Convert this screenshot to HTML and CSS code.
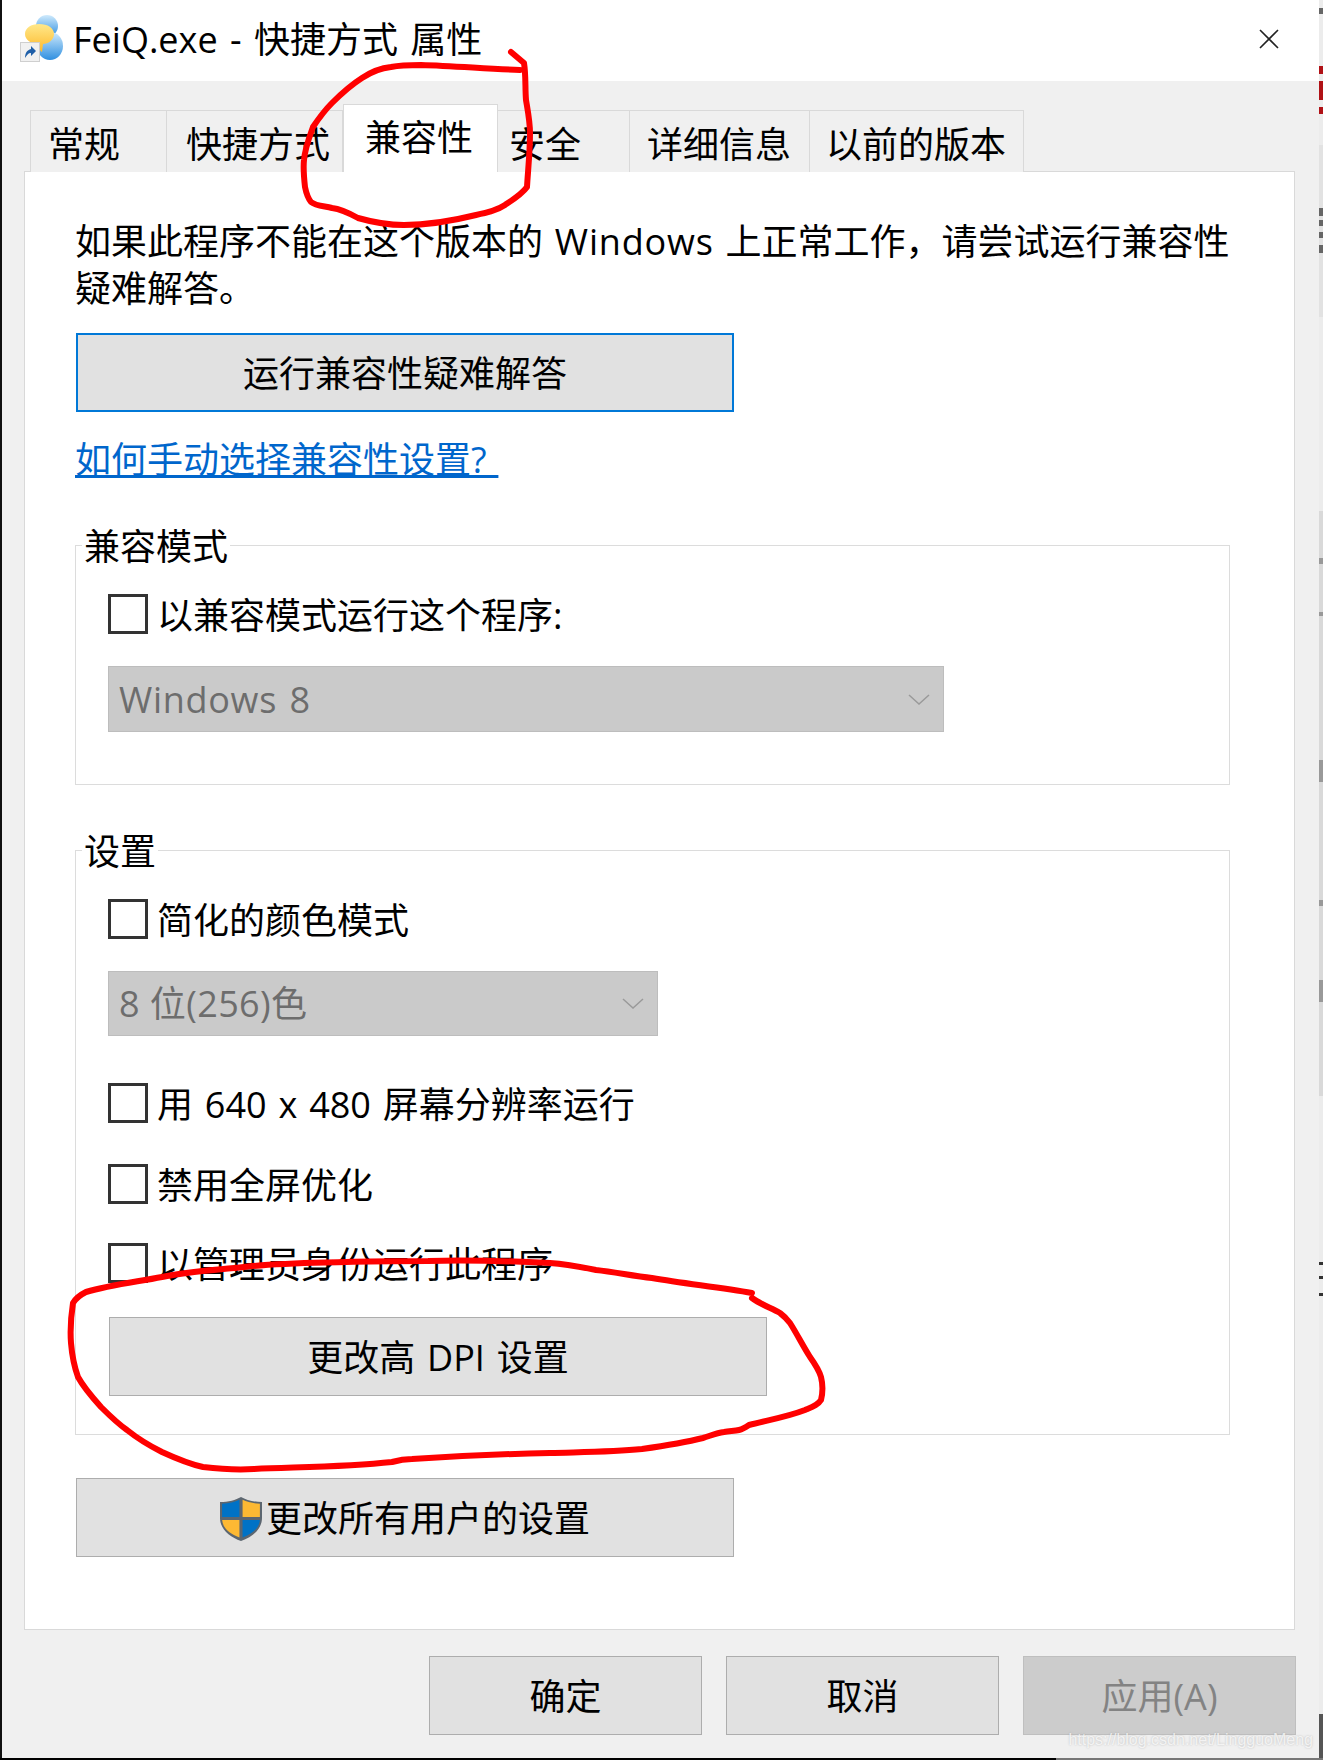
FILE: index.html

```html
<!DOCTYPE html>
<html lang="zh-CN">
<head>
    <meta charset="UTF-8">
    <title>FeiQ.exe - 快捷方式 属性</title>
    <link rel="stylesheet" href="styles.css">
</head>
<body>

<div class="screen">
    <div class="edge-left"></div>

    <div class="window">
        <div class="titlebar">
            <svg class="app-icon" width="46" height="48" viewBox="0 0 46 48">
                <defs>
                    <linearGradient id="blueFill" x1="0" y1="0" x2="0" y2="1">
                        <stop offset="0" stop-color="#cfeafc"/>
                        <stop offset="1" stop-color="#2f8fe0"/>
                    </linearGradient>
                    <linearGradient id="yellowFill" x1="0" y1="0" x2="0" y2="1">
                        <stop offset="0" stop-color="#ffe88a"/>
                        <stop offset="1" stop-color="#fdb92c"/>
                    </linearGradient>
                </defs>
                <circle cx="27" cy="11" r="11" fill="url(#blueFill)"/>
                <ellipse cx="30" cy="31" rx="13" ry="14" fill="url(#blueFill)"/>
                <path d="M19 9c9 0 15 4 15 10 0 6-6 10-11 10l-1 8c-2-1-3-4-3-8-8 0-14-4-14-10 0-6 6-10 14-10z" fill="url(#yellowFill)"/>
                <rect x="0.5" y="27.5" width="19" height="19" fill="#f1f1f1" stroke="#cfcfcf"/>
                <path d="M5 43c0-5 2-8 6-9v-3l5 5-5 5v-3c-3 0-4 2-6 5z" fill="#1f5fa8"/>
            </svg>
            <span class="title-text">FeiQ.exe - 快捷方式 属性</span>
            <svg class="close-icon" width="20" height="20" viewBox="0 0 20 20">
                <path d="M1 1l18 18M19 1L1 19" fill="none" stroke="#222" stroke-width="1.6"/>
            </svg>
        </div>

        <div class="content">
            <div class="tabs">
                <div class="tab tab-general">常规</div>
                <div class="tab tab-shortcut">快捷方式</div>
                <div class="tab tab-active">兼容性</div>
                <div class="tab tab-security">安全</div>
                <div class="tab tab-details">详细信息</div>
                <div class="tab tab-versions">以前的版本</div>
            </div>

            <div class="panel">
                <p class="intro">如果此程序不能在这个版本的 <span class="latin">Windows</span> 上正常工作，请尝试运行兼容性<br>疑难解答。</p>
                <div class="btn btn-focus">运行兼容性疑难解答</div>
                <a class="help-link" href="#">如何手动选择兼容性设置?&nbsp;</a>

                <div class="group group-mode">
                    <div class="legend">兼容模式</div>
                    <div class="check-row">
                        <span class="checkbox"></span>
                        <span class="label">以兼容模式运行这个程序:</span>
                    </div>
                    <div class="select select-wide">
                        <span>Windows 8</span>
                        <svg width="22" height="11" viewBox="0 0 22 11"><path d="M1 1l10 9 10-9" fill="none" stroke="#9a9a9a" stroke-width="1.5"/></svg>
                    </div>
                </div>

                <div class="group group-settings">
                    <div class="legend">设置</div>
                    <div class="check-row row-color">
                        <span class="checkbox"></span>
                        <span class="label">简化的颜色模式</span>
                    </div>
                    <div class="select select-narrow">
                        <span>8 位(256)色</span>
                        <svg width="22" height="11" viewBox="0 0 22 11"><path d="M1 1l10 9 10-9" fill="none" stroke="#9a9a9a" stroke-width="1.5"/></svg>
                    </div>
                    <div class="check-row row-res">
                        <span class="checkbox"></span>
                        <span class="label">用 640 x 480 屏幕分辨率运行</span>
                    </div>
                    <div class="check-row row-full">
                        <span class="checkbox"></span>
                        <span class="label">禁用全屏优化</span>
                    </div>
                    <div class="check-row row-admin">
                        <span class="checkbox"></span>
                        <span class="label">以管理员身份运行此程序</span>
                    </div>
                    <div class="btn btn-dpi">更改高 DPI 设置</div>
                </div>

                <div class="btn btn-users">
                    <svg class="shield" width="42" height="46" viewBox="1 0 40 46" preserveAspectRatio="none">
                        <path d="M21 1c5 3 12 5 20 5v16c0 11-9 19-20 23C10 41 1 33 1 22V6c8 0 15-2 20-5z" fill="#5c6670"/>
                        <path d="M19.500 3.800C15 6 9.500 7.500 3 7.800V21h16.500z" fill="#0072c6"/>
                        <path d="M22.500 3.800C27 6 32.500 7.500 39 7.800V21H22.500z" fill="#fdb933"/>
                        <path d="M3 24h16.500v17.500C10.500 38 3.500 32 3 24z" fill="#fdb933"/>
                        <path d="M39 24H22.500v17.500C31.500 38 38.500 32 39 24z" fill="#0072c6"/>
                    </svg>
                    <span>更改所有用户的设置</span>
                </div>
            </div>

            <div class="footer">
                <div class="btn btn-footer">确定</div>
                <div class="btn btn-footer">取消</div>
                <div class="btn btn-footer btn-disabled">应用(A)</div>
            </div>
        </div>
    </div>

    <!-- bits of the desktop showing past the window -->
    <svg class="edge-right" width="4" height="1758" viewBox="0 0 4 1758">
        <rect width="4" height="1758" fill="#ececec"/>
        <rect y="8" width="4" height="6" fill="#666"/>
        <rect y="66" width="4" height="8" fill="#b01116"/>
        <rect y="81" width="4" height="19" fill="#b01116"/>
        <rect y="107" width="4" height="7" fill="#b01116"/>
        <rect y="145" width="4" height="172" fill="#e2e2e2"/>
        <rect y="208" width="4" height="8" fill="#666"/>
        <rect y="220" width="4" height="6" fill="#666"/>
        <rect y="232" width="4" height="6" fill="#666"/>
        <rect y="245" width="4" height="8" fill="#666"/>
        <rect y="511" width="4" height="585" fill="#d9d9d9"/>
        <rect y="558" width="4" height="6" fill="#999"/>
        <rect y="612" width="4" height="4" fill="#999"/>
        <rect y="760" width="4" height="22" fill="#999"/>
        <rect y="900" width="4" height="6" fill="#999"/>
        <rect y="980" width="4" height="22" fill="#999"/>
        <rect y="1262" width="4" height="3" fill="#333"/>
        <rect y="1276" width="4" height="3" fill="#333"/>
        <rect y="1293" width="4" height="3" fill="#333"/>
        <rect y="1714" width="4" height="44" fill="#555"/>
    </svg>
</div>
<div class="edge-bottom"></div>

<!-- hand drawn red marks over the screenshot -->
<svg class="scribble" width="1323" height="1760" viewBox="0 0 1323 1760">
    <path d="M511 52L524 63C526 75 525 88 526 100C528 112 530 122 530 133C530 152 528 170 527 187C522 194 514 199 505 205C496 211 486 213 476 215C452 221 428 225 404 225C388 225 372 222 358 218C349 213 341 209 332 208C324 206 316 206 311 202C307 197 306 192 305 187C304 178 303 169 304 160C305 148 309 138 313 127C319 118 325 110 332 103C342 93 351 85 362 78C371 72 381 68 391 67C401 65 411 65 421 65C455 66 488 69 520 70" fill="none" stroke="#f00" stroke-width="6" stroke-linecap="round" stroke-linejoin="round"/>
    <path d="M752 1293C720 1287 686 1284 652 1278C633 1276 615 1272 596 1270C581 1267 565 1264 550 1263C509 1261 468 1260 428 1261C400 1261 373 1261 346 1262C312 1263 278 1263 244 1267C216 1270 189 1271 162 1277C136 1282 110 1285 86 1292C80 1295 76 1298 73 1303C71 1316 70 1330 71 1343C72 1355 74 1366 78 1377C84 1388 92 1397 101 1407C109 1415 117 1423 127 1430C137 1438 150 1446 162 1452C175 1458 189 1464 203 1467C220 1469 237 1470 254 1469C300 1467 346 1467 392 1462C399 1460 405 1459 412 1459C458 1456 504 1454 550 1453C581 1452 612 1452 642 1449C663 1446 683 1443 703 1438C710 1436 716 1433 724 1432C730 1431 735 1431 739 1430C743 1429 746 1427 749 1425C768 1420 787 1417 805 1410C812 1407 818 1405 821 1400C823 1392 823 1385 821 1377C819 1370 815 1364 810 1357C803 1346 797 1334 790 1323C787 1319 784 1316 780 1313C771 1308 760 1304 752 1298" fill="none" stroke="#f00" stroke-width="6" stroke-linecap="round" stroke-linejoin="round"/>
</svg>

<div class="watermark">https://blog.csdn.net/LingguoMeng</div>

</body>
</html>
```

FILE: styles.css

```css
* {
    box-sizing: border-box;
}
html, body {
    margin: 0;
    padding: 0;
}
body {
    position: relative;
    width: 1323px;
    height: 1760px;
    overflow: hidden;
    background-color: #000;
    font-family: "Open Sans", "Noto Sans CJK SC", sans-serif;
    font-size: 36px;
    line-height: 47px;
    word-spacing: 2.5px;
    color: #000;
    white-space: nowrap;
}
.screen {
    display: flex;
    height: 1758px;
}
.edge-left {
    width: 2px;
    background-color: #111;
}
.edge-right {
    display: block;
    flex: none;
}
.edge-bottom {
    height: 2px;
    background: linear-gradient(to right, #000 1056px, #777 1056px);
}
.window {
    flex: 1;
    display: flex;
    flex-direction: column;
    background-color: #f0f0f0;
}

/* title bar */
.titlebar {
    display: flex;
    align-items: center;
    height: 81px;
    padding: 0 0 3px 18px;
    background-color: #fff;
}
.app-icon {
    margin-right: 7px;
}
.title-text {
    flex: 1;
    word-spacing: 3px;
}
.close-icon {
    margin-right: 40px;
}

/* tabs */
.content {
    flex: 1;
    display: flex;
    flex-direction: column;
    padding: 23px 0 0 22px;
}
.tabs {
    display: flex;
    align-items: flex-end;
    height: 68px;
    margin-left: 6px;
    margin-bottom: -1px;
}
.tab {
    position: relative;
    height: 62px;
    padding: 10px 0 0 17px;
    background-color: #f0f0f0;
    border: 1px solid #d9d9d9;
    border-left: none;
    border-bottom: none;
}
.tab-general { width: 137px; border-left: 1px solid #d9d9d9; }
.tab-shortcut { width: 176px; padding-left: 19px; }
.tab-active {
    z-index: 1;
    width: 155px;
    height: 68px;
    padding: 9px 0 0 21px;
    background-color: #fff;
    border-left: 1px solid #d9d9d9;
}
.tab-security { width: 132px; padding-left: 11px; }
.tab-details { width: 180px; }
.tab-versions { width: 214px; padding-left: 16px; }

/* main panel */
.panel {
    width: 1271px;
    height: 1459px;
    padding: 46px 0 0 51px;
    background-color: #fff;
    border: 1px solid #d9d9d9;
}
.intro {
    margin: 0 0 0 -1px;
}
.latin {
    letter-spacing: 0.8px;
}
.btn {
    display: flex;
    justify-content: center;
    align-items: center;
    width: 658px;
    height: 79px;
    padding-top: 2px;
    background-color: #e1e1e1;
    border: 1px solid #adadad;
}
.btn-focus {
    margin-top: 21px;
    border: 2px solid #0078d7;
}
.help-link {
    display: block;
    width: fit-content;
    margin: 24px 0 0 -1px;
    color: #0066cc;
    text-decoration: underline;
}

/* group boxes */
.group {
    width: 1155px;
    margin-left: -1px;
    padding-left: 32px;
    border: 1px solid #dcdcdc;
}
.group-mode {
    height: 240px;
    margin-top: 62px;
}
.group-settings {
    height: 585px;
    margin-top: 65px;
}
.legend {
    width: fit-content;
    margin: -23px 0 0 -26px;
    padding: 0 2px;
    background-color: #fff;
}
.check-row {
    display: flex;
    align-items: center;
    height: 40px;
    margin-top: 24px;
}
.checkbox {
    width: 40px;
    height: 40px;
    margin-right: 9px;
    background-color: #fff;
    border: 3px solid #333;
}
.label {
    padding-top: 2px;
}
.select {
    display: flex;
    justify-content: space-between;
    align-items: center;
    margin-top: 32px;
    padding: 0 13px 0 10px;
    background-color: #cacaca;
    border: 1px solid #bdbdbd;
    color: #6d6d6d;
}
.select-wide {
    width: 836px;
    height: 66px;
    letter-spacing: 0.7px;
}
.select-narrow {
    width: 550px;
    height: 65px;
    letter-spacing: 0.4px;
    word-spacing: 0;
}
.row-color { margin-top: 24px; }
.row-res { margin-top: 47px; }
.row-full { margin-top: 41px; }
.row-admin { margin-top: 39px; }
.btn-dpi {
    margin: 34px 0 0 1px;
}
.btn-users {
    margin-top: 43px;
}
.shield {
    margin-right: 4px;
}

/* bottom buttons */
.footer {
    display: flex;
    justify-content: flex-end;
    gap: 24px;
    width: 1272px;
    padding-top: 26px;
}
.btn-footer {
    width: 273px;
}
.btn-disabled {
    background-color: #cccccc;
    border-color: #bfbfbf;
    color: #838383;
}

/* overlays */
.scribble {
    position: absolute;
    top: 0;
    left: 0;
    pointer-events: none;
}
.watermark {
    position: absolute;
    top: 1729px;
    right: 10px;
    font-family: "Liberation Sans", sans-serif;
    font-size: 16px;
    line-height: 22px;
    word-spacing: 0;
    color: rgba(255, 255, 255, 0.75);
    text-shadow: 0 0 2px rgba(150, 150, 150, 0.6);
}
```
